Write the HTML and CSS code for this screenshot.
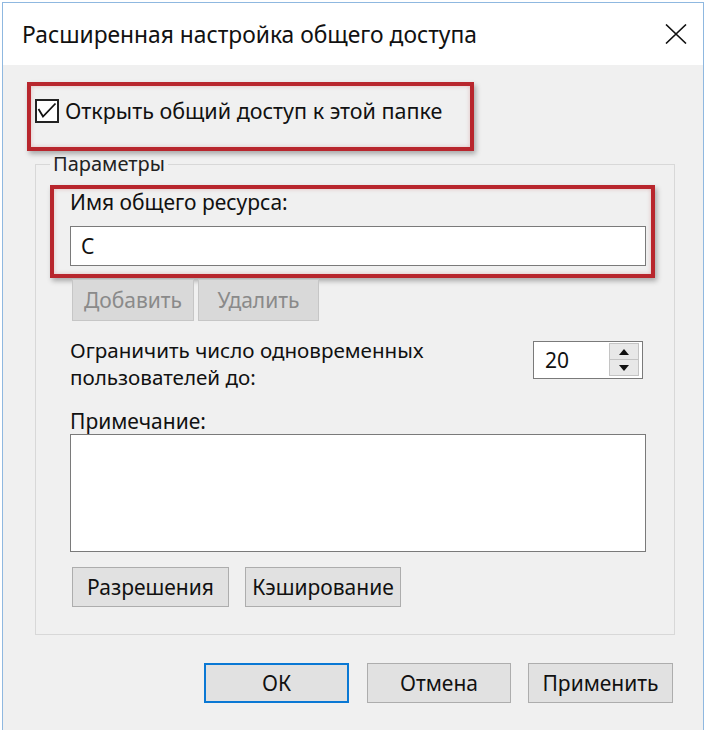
FILE: index.html
```html
<!DOCTYPE html>
<html lang="ru">
<head>
<meta charset="utf-8">
<title>Расширенная настройка общего доступа</title>
<link rel="stylesheet" href="styles.css">
</head>
<body>
<div class="window">
  <div class="titlebar">
    <span class="title">Расширенная настройка общего доступа</span>
    <svg class="close" width="22" height="20" viewBox="0 0 22 20"><path d="M1 0.5 L21 19.5 M21 0.5 L1 19.5" stroke="#111" stroke-width="1.6" fill="none"/></svg>
  </div>
  <div class="content">
    <div class="mark mark-share">
      <div class="check-row">
        <span class="checkbox"><svg width="20" height="20" viewBox="0 0 20 20"><path d="M1.5 8 L6 15.5 L18.5 2.5" stroke="#111" stroke-width="1.8" fill="none"/></svg></span>
        <span class="check-text">Открыть общий доступ к этой папке</span>
      </div>
    </div>
    <fieldset class="group">
      <legend class="legend">Параметры</legend>
      <div class="mark mark-name">
        <div class="label">Имя общего ресурса:</div>
        <div class="field">С</div>
      </div>
      <div class="btn-row btn-row1">
        <button class="btn btn-disabled btn-add">Добавить</button>
        <button class="btn btn-disabled btn-del">Удалить</button>
      </div>
      <div class="limit-row">
        <div class="label limit-label">Ограничить число одновременных<br>пользователей до:</div>
        <div class="spinner">
          <span class="spin-val">20</span>
          <span class="spin-btns">
            <span class="spin-btn"><span class="tri-up"></span></span>
            <span class="spin-btn"><span class="tri-down"></span></span>
          </span>
        </div>
      </div>
      <div class="label note-label">Примечание:</div>
      <div class="textarea"></div>
      <div class="btn-row btn-row2">
        <button class="btn btn-perm">Разрешения</button>
        <button class="btn btn-cache">Кэширование</button>
      </div>
    </fieldset>
    <div class="footer">
      <button class="btn btn-foot btn-ok">ОК</button>
      <button class="btn btn-foot btn-cancel">Отмена</button>
      <button class="btn btn-foot btn-apply">Применить</button>
    </div>
  </div>
</div>
</body>
</html>
```

FILE: styles.css
```css
html, body {
  margin: 0;
  padding: 0;
  background: #ffffff;
}
body {
  font-family: "Noto Sans", "Open Sans", sans-serif;
  color: #111;
  overflow: hidden;
}
.window {
  margin: 2px 0 0 2px;
  width: 702px;
  border: 1px solid #8fb8e0;
  border-bottom: none;
  box-sizing: border-box;
}
.titlebar {
  height: 62px;
  background: #ffffff;
  display: flex;
  align-items: center;
  justify-content: space-between;
  padding: 0 16px 0 19px;
}
.title {
  font-size: 22.8px;
}
.close {
  display: block;
}
.content {
  background: #f0f0f0;
  padding: 17px 0 0 24px;
  min-height: 680px;
  box-sizing: border-box;
}
.mark {
  border: 4px solid #b8262d;
  box-shadow: 2px 3px 5px rgba(0, 0, 0, 0.3), inset 0 0 4px rgba(184, 38, 45, 0.25);
  box-sizing: border-box;
}
.mark-share {
  width: 447px;
  height: 69px;
  padding: 13px 0 0 4px;
}
.check-row {
  display: flex;
  align-items: center;
  gap: 6px;
  font-size: 21.5px;
  line-height: 24px;
}
.checkbox {
  width: 24px;
  height: 24px;
  border: 2px solid #222;
  box-sizing: border-box;
  background: #fff;
  display: flex;
  align-items: center;
  justify-content: center;
}
.checkbox svg {
  display: block;
}
.group {
  margin: 1px 0 0 8px;
  width: 640px;
  border: 1px solid #d8d8d8;
  padding: 0 28px 27px 14px;
  box-sizing: border-box;
  min-width: 0;
}
.legend {
  padding: 0 3px;
  font-size: 20px;
  line-height: 24px;
  color: #222;
}
.label {
  font-size: 21px;
  line-height: 26px;
}
.mark-name {
  margin-top: 9px;
  width: 605px;
  padding: 0 5px 8px 16px;
}
.field {
  margin-top: 11px;
  height: 40px;
  border: 1px solid #7a7a7a;
  background: #fff;
  box-sizing: border-box;
  padding-left: 10px;
  font-size: 21px;
  line-height: 38px;
}
.btn {
  font-family: inherit;
  font-size: 21px;
  color: #111;
  background: #e1e1e1;
  border: 1px solid #adadad;
  box-sizing: border-box;
  padding: 0;
  margin: 0;
  display: flex;
  align-items: center;
  justify-content: center;
}
.btn-row {
  display: flex;
}
.btn-row1 {
  margin: 1px 0 0 22px;
}
.btn-disabled {
  background: #d9d9d9;
  border-color: #c6c6c6;
  color: #8a8a8a;
  height: 42px;
}
.btn-add {
  width: 122px;
  margin-right: 4px;
}
.btn-del {
  width: 121px;
}
.limit-row {
  display: flex;
  justify-content: space-between;
  align-items: flex-start;
  margin: 16px 0 0 20px;
}
.limit-label {
  line-height: 27px;
  font-size: 20.6px;
}
.spinner {
  width: 110px;
  height: 38px;
  border: 1px solid #7a7a7a;
  background: #fff;
  box-sizing: border-box;
  display: flex;
  margin: 4px 3px 0 0;
}
.spin-val {
  flex: 1;
  padding-left: 11px;
  font-size: 21px;
  line-height: 36px;
}
.spin-btns {
  width: 33px;
  display: flex;
  flex-direction: column;
  padding: 1px 3px 2px 0;
  box-sizing: border-box;
}
.spin-btn {
  flex: 1;
  background: #e8e8e8;
  border: 1px solid #c4c4c4;
  display: flex;
  align-items: center;
  justify-content: center;
}
.spin-btn + .spin-btn {
  border-top: none;
}
.tri-up {
  width: 0;
  height: 0;
  border-left: 5px solid transparent;
  border-right: 5px solid transparent;
  border-bottom: 6px solid #111;
}
.tri-down {
  width: 0;
  height: 0;
  border-left: 5px solid transparent;
  border-right: 5px solid transparent;
  border-top: 6px solid #111;
}
.note-label {
  margin: 18px 0 0 20px;
  line-height: 25px;
}
.textarea {
  margin-left: 20px;
  height: 118px;
  border: 1px solid #7a7a7a;
  background: #fff;
  box-sizing: border-box;
}
.btn-row2 {
  margin: 15px 0 0 22px;
  gap: 16px;
}
.btn-perm {
  width: 157px;
  height: 40px;
}
.btn-cache {
  width: 156px;
  height: 40px;
}
.footer {
  display: flex;
  justify-content: flex-end;
  margin-top: 28px;
  padding-right: 30px;
}
.btn-foot {
  height: 40px;
  width: 145px;
}
.btn-ok {
  border: 2px solid #0a78d4;
  margin-right: 18px;
}
.btn-cancel {
  width: 144px;
  margin-right: 17px;
}
```
